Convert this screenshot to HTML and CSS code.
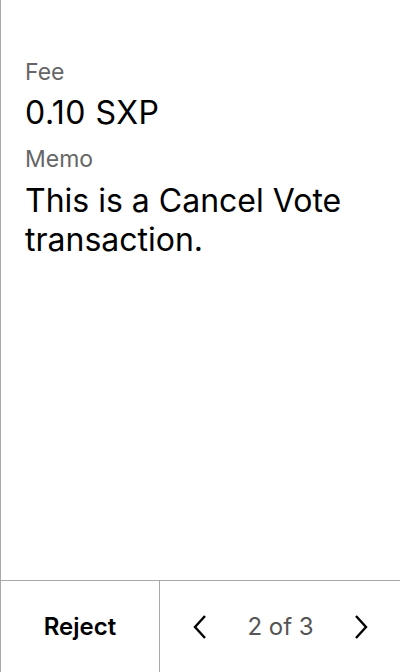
FILE: index.html
```html
<!DOCTYPE html>
<html>
<head>
<meta charset="utf-8">
<link rel="stylesheet" href="styles.css">
</head>
<body>
<div class="screen">
  <main class="content">
    <div class="label">Fee</div>
    <div class="value amount">0.10 SXP</div>
    <div class="label">Memo</div>
    <div class="value memo">This is a Cancel Vote transaction.</div>
  </main>
  <footer class="bar">
    <button class="reject">Reject</button>
    <div class="pager">
      <svg class="chev" width="16" height="26" viewBox="0 0 16 26"><path d="M13 2 L3 13 L13 24" fill="none" stroke="#000" stroke-width="2.4"/></svg>
      <span class="count">2 of 3</span>
      <svg class="chev" width="16" height="26" viewBox="0 0 16 26"><path d="M3 2 L13 13 L3 24" fill="none" stroke="#000" stroke-width="2.4"/></svg>
    </div>
  </footer>
</div>
</body>
</html>
```
FILE: styles.css
```css
html, body { margin: 0; padding: 0; background: #fff; }
body { font-family: Inter, "Noto Sans", sans-serif; color: #000; }
.screen {
  width: 400px; height: 672px; box-sizing: border-box;
  border-left: 1px solid #a8a8a8;
  display: flex; flex-direction: column;
}
.content { flex: 1; padding: 56px 24px 0 24px; }
.label { font-size: 23px; color: #666; line-height: 32px; }
.value { font-size: 32px; line-height: 38px; margin: 6px 0 11px; }
.amount { letter-spacing: 0.5px; }
.memo { line-height: 39px; }
.bar { height: 92px; border-top: 1px solid #a8a8a8; display: flex; box-sizing: border-box; }
.reject {
  width: 159px; border: 0; border-right: 1px solid #a8a8a8; background: #fff;
  font-family: inherit; font-size: 24px; font-weight: 600; color: #000; padding: 0;
}
.pager { flex: 1; display: flex; align-items: center; justify-content: space-between; padding: 0 31px 0 32px; }
.count { font-size: 24px; color: #555; }
.chev { display: block; }
```
